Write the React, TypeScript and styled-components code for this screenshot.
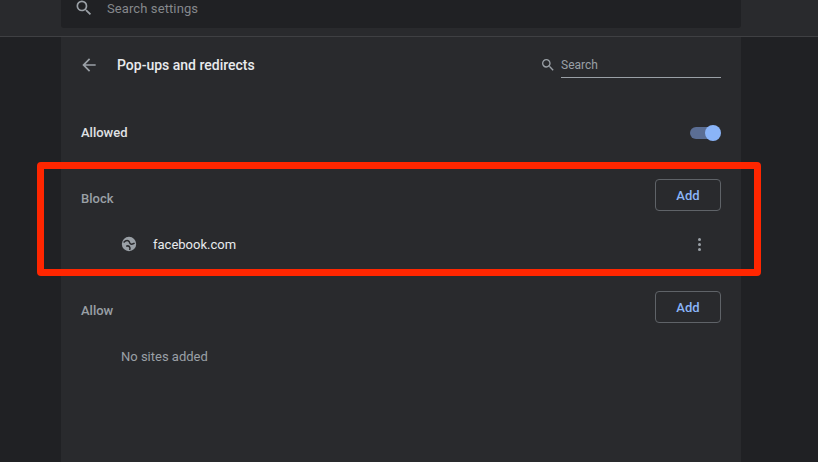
import React from "react";
import styled, { createGlobalStyle } from "styled-components";

const GlobalStyle = createGlobalStyle`
  html, body {
    margin: 0;
    padding: 0;
    height: 100%;
    background: #202124;
    overflow: hidden;
  }
  #root {
    height: 100%;
  }
`;

function SearchIcon({ size }: { size: number }) {
  return (
    <svg width={size} height={size} viewBox="0 0 24 24" fill="#9aa0a6">
      <path d="M15.5 14h-.79l-.28-.27A6.471 6.471 0 0 0 16 9.5 6.5 6.5 0 1 0 9.5 16c1.61 0 3.09-.59 4.23-1.57l.27.28v.79l5 4.99L20.49 19l-4.99-5zm-6 0C7.01 14 5 11.99 5 9.5S7.01 5 9.5 5 14 7.01 14 9.5 11.99 14 9.5 14z" />
    </svg>
  );
}

function App() {
  return (
    <Page>
      <GlobalStyle />
      <Header>
        <SearchBar>
          <SearchIcon size={20} />
          <SearchPlaceholder>Search settings</SearchPlaceholder>
        </SearchBar>
      </Header>
      <Card>
        <TitleRow>
          <BackArrow width="20" height="20" viewBox="0 0 24 24" fill="#9aa0a6">
            <path d="M20 11H7.83l5.59-5.59L12 4l-8 8 8 8 1.41-1.41L7.83 13H20v-2z" />
          </BackArrow>
          <Title>Pop-ups and redirects</Title>
          <SiteSearch>
            <SearchIcon size={16} />
            <SiteSearchField>Search</SiteSearchField>
          </SiteSearch>
        </TitleRow>
        <AllowedRow>
          <RowLabel>Allowed</RowLabel>
          <Toggle>
            <Knob />
          </Toggle>
        </AllowedRow>
        <SectionRow>
          <SectionLabel>Block</SectionLabel>
          <AddButton>Add</AddButton>
        </SectionRow>
        <SiteRow>
          <svg width="16" height="16" viewBox="0 0 16 16">
            <circle cx="8" cy="8" r="7.2" fill="#9aa0a6" />
            <path
              d="M2.6 6.6C4.4 4.6 6.6 4.2 8 5.4c.9.8.3 2.2 1.8 2.6 1.4.4 2.8-.2 3.8-.8M5.2 10.2c1.6-.6 3.2.2 3.6 1.2.3.8.2 1.8-.2 2.6"
              fill="none"
              stroke="#292a2d"
              strokeWidth="1.5"
            />
          </svg>
          <SiteName>facebook.com</SiteName>
          <MoreDots>
            <Dot />
            <Dot />
            <Dot />
          </MoreDots>
        </SiteRow>
        <AllowSectionRow>
          <SectionLabel>Allow</SectionLabel>
          <AddButton>Add</AddButton>
        </AllowSectionRow>
        <EmptyRow>No sites added</EmptyRow>
      </Card>
      <Highlight />
    </Page>
  );
}

export default App;

const Page = styled.div`
  position: relative;
  width: 818px;
  height: 462px;
  overflow: hidden;
  display: flex;
  flex-direction: column;
  background: #202124;
  font-family: Roboto, "Liberation Sans", sans-serif;
`;

const Header = styled.div`
  height: 36px;
  flex: none;
  box-sizing: content-box;
  padding-left: 61px;
  background: #292a2d;
  border-bottom: 1px solid #3f4043;
`;

const SearchBar = styled.div`
  width: 680px;
  height: 28px;
  display: flex;
  align-items: center;
  padding: 0 0 12px 13px;
  box-sizing: border-box;
  background: #202124;
  border-radius: 0 0 3px 3px;
`;

const SearchPlaceholder = styled.span`
  margin-left: 13px;
  font-size: 13px;
  color: #85888c;
  letter-spacing: 0.1px;
`;

const Card = styled.div`
  width: 680px;
  flex: 1;
  margin-left: 61px;
  padding: 0 20px;
  box-sizing: border-box;
  background: #292a2d;
`;

const TitleRow = styled.div`
  height: 55px;
  display: flex;
  align-items: center;
`;

const BackArrow = styled.svg`
  margin-left: -2px;
  flex: none;
`;

const Title = styled.h1`
  margin: 0 0 0 18px;
  font-size: 14px;
  font-weight: 500;
  color: #e8eaed;
`;

const SiteSearch = styled.div`
  margin-left: auto;
  display: flex;
  align-items: center;
  gap: 5px;
`;

const SiteSearchField = styled.div`
  width: 160px;
  height: 26px;
  line-height: 26px;
  box-sizing: border-box;
  font-size: 12px;
  color: #9aa0a6;
  border-bottom: 1px solid #9aa0a6;
`;

const AllowedRow = styled.div`
  height: 80px;
  display: flex;
  align-items: center;
  justify-content: space-between;
`;

const RowLabel = styled.span`
  font-size: 13px;
  font-weight: 500;
  color: #e0e2e5;
`;

const Toggle = styled.div`
  position: relative;
  width: 30px;
  height: 12px;
  margin: 2px 1px 0 0;
  border-radius: 6px;
  background: #5b6e94;
`;

const Knob = styled.div`
  position: absolute;
  right: -1px;
  top: -2px;
  width: 16px;
  height: 16px;
  border-radius: 50%;
  background: #8ab4f8;
`;

const SectionRow = styled.div`
  height: 52px;
  display: flex;
  align-items: center;
  justify-content: space-between;
`;

const AllowSectionRow = styled(SectionRow)`
  margin-top: 20px;
`;

const SectionLabel = styled.span`
  font-size: 13px;
  font-weight: 500;
  color: #9aa0a6;
`;

const AddButton = styled.button`
  width: 66px;
  height: 32px;
  margin-bottom: 6px;
  padding: 0;
  box-sizing: border-box;
  background: transparent;
  border: 1px solid #5f6368;
  border-radius: 4px;
  color: #8ab4f8;
  font-family: inherit;
  font-size: 13px;
  font-weight: 500;
`;

const SiteRow = styled.div`
  height: 40px;
  display: flex;
  align-items: center;
  padding-left: 40px;
`;

const SiteName = styled.span`
  margin-left: 16px;
  font-size: 13px;
  color: #e8eaed;
`;

const MoreDots = styled.div`
  margin-left: auto;
  margin-right: 20px;
  display: flex;
  flex-direction: column;
  gap: 2px;
`;

const Dot = styled.span`
  width: 3px;
  height: 3px;
  border-radius: 50%;
  background: #9aa0a6;
`;

const EmptyRow = styled.div`
  height: 42px;
  line-height: 42px;
  padding-left: 40px;
  font-size: 13px;
  color: #9aa0a6;
`;

const Highlight = styled.div`
  position: absolute;
  left: 37px;
  top: 162px;
  width: 724px;
  height: 114px;
  box-sizing: border-box;
  border: 7px solid #ff2600;
  border-radius: 4px;
  pointer-events: none;
`;
